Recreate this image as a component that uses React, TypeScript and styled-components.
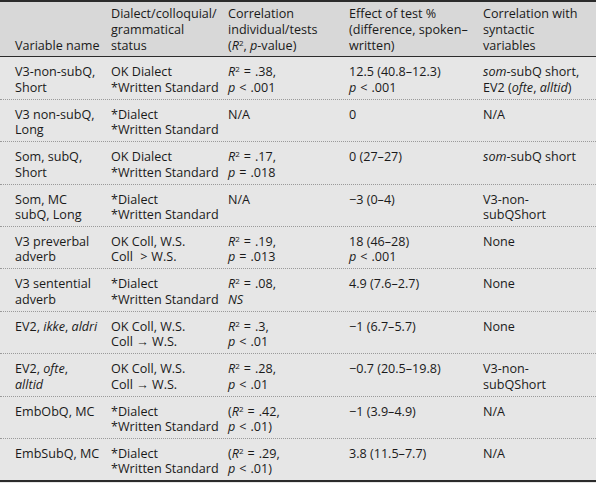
import React from "react";
import styled, { createGlobalStyle } from "styled-components";

const GlobalStyle = createGlobalStyle`
  html, body {
    margin: 0;
    padding: 0;
    background: #e6e6e6;
  }
  body {
    font-family: "Open Sans", "Noto Sans", sans-serif;
    color: #1a1a1a;
  }
`;

const Table = styled.div`
  width: 596px;
  border-top: 2px solid #2b2b2b;
  border-bottom: 2px solid #2b2b2b;
  background: #e6e6e6;
`;

const Row = styled.div<{ $head?: boolean }>`
  display: grid;
  grid-template-columns: 104px 117px 121px 134px 1fr;
  background: ${(p) => (p.$head ? "#d8d8d8" : "#e6e6e6")};
  border-bottom: ${(p) => (p.$head ? "1px solid #2b2b2b" : "1px dotted #9a9a9a")};
  padding: ${(p) => (p.$head ? "4px 0 3px" : "7px 0 3.4px")};
  &:last-child {
    border-bottom: none;
  }
`;

const Cell = styled.div<{ $first?: boolean; $head?: boolean }>`
  padding-left: ${(p) => (p.$first ? "15px" : "7px")};
  padding-right: 4px;
  font-size: 12.6px;
  line-height: ${(p) => (p.$head ? "15.8px" : "15.5px")};
  align-self: ${(p) => (p.$head ? "end" : "start")};
  white-space: nowrap;
`;

const I = styled.i`
  font-style: italic;
`;

const Sup = styled.span`
  font-size: 8px;
  position: relative;
  top: -4px;
  line-height: 0;
`;

const Op = styled.span`
  padding: 0 4px;
`;

const R2 = ({ v }: { v: string }) => (
  <>
    <I>R</I>
    <Sup>2</Sup>
    <Op>=</Op>
    {v}
  </>
);

const P = ({ op, v }: { op: string; v: string }) => (
  <>
    <I>p</I>
    <Op>{op}</Op>
    {v}
  </>
);

const WS = "*Written Standard";

const header = [
  <>Variable name</>,
  <>
    Dialect/colloquial/
    <br />
    grammatical
    <br />
    status
  </>,
  <>
    Correlation
    <br />
    individual/tests
    <br />(<I>R</I>
    <Sup>2</Sup>, <I>p</I>-value)
  </>,
  <>
    Effect of test %
    <br />
    (difference, spoken–
    <br />
    written)
  </>,
  <>
    Correlation with
    <br />
    syntactic
    <br />
    variables
  </>,
];

const rows: React.ReactNode[][] = [
  [
    <>V3-non-subQ,<br />Short</>,
    <>OK Dialect<br />{WS}</>,
    <><R2 v=".38," /><br /><P op="<" v=".001" /></>,
    <>12.5 (40.8–12.3)<br /><P op="<" v=".001" /></>,
    <><I>som</I>-subQ short,<br />EV2 (<I>ofte</I>, <I>alltid</I>)</>,
  ],
  [
    <>V3 non-subQ,<br />Long</>,
    <>*Dialect<br />{WS}</>,
    <>N/A</>,
    <>0</>,
    <>N/A</>,
  ],
  [
    <>Som, subQ,<br />Short</>,
    <>OK Dialect<br />{WS}</>,
    <><R2 v=".17," /><br /><P op="=" v=".018" /></>,
    <>0 (27–27)</>,
    <><I>som</I>-subQ short</>,
  ],
  [
    <>Som, MC<br />subQ, Long</>,
    <>*Dialect<br />{WS}</>,
    <>N/A</>,
    <>−3 (0–4)</>,
    <>V3-non-<br />subQShort</>,
  ],
  [
    <>V3 preverbal<br />adverb</>,
    <>OK Coll, W.S.<br />Coll <Op>&gt;</Op>W.S.</>,
    <><R2 v=".19," /><br /><P op="=" v=".013" /></>,
    <>18 (46–28)<br /><P op="<" v=".001" /></>,
    <>None</>,
  ],
  [
    <>V3 sentential<br />adverb</>,
    <>*Dialect<br />{WS}</>,
    <><R2 v=".08," /><br /><I>NS</I></>,
    <>4.9 (7.6–2.7)</>,
    <>None</>,
  ],
  [
    <>EV2, <I>ikke</I>, <I>aldri</I></>,
    <>OK Coll, W.S.<br />Coll → W.S.</>,
    <><R2 v=".3," /><br /><P op="<" v=".01" /></>,
    <>−1 (6.7–5.7)</>,
    <>None</>,
  ],
  [
    <>EV2, <I>ofte</I>,<br /><I>alltid</I></>,
    <>OK Coll, W.S.<br />Coll → W.S.</>,
    <><R2 v=".28," /><br /><P op="<" v=".01" /></>,
    <>−0.7 (20.5–19.8)</>,
    <>V3-non-<br />subQShort</>,
  ],
  [
    <>EmbObQ, MC</>,
    <>*Dialect<br />{WS}</>,
    <>(<R2 v=".42," /><br /><P op="<" v=".01)" /></>,
    <>−1 (3.9–4.9)</>,
    <>N/A</>,
  ],
  [
    <>EmbSubQ, MC</>,
    <>*Dialect<br />{WS}</>,
    <>(<R2 v=".29," /><br /><P op="<" v=".01)" /></>,
    <>3.8 (11.5–7.7)</>,
    <>N/A</>,
  ],
];

export default function App() {
  return (
    <>
      <GlobalStyle />
      <Table>
        <Row $head>
          {header.map((h, i) => (
            <Cell key={i} $head $first={i === 0}>
              {h}
            </Cell>
          ))}
        </Row>
        {rows.map((r, ri) => (
          <Row key={ri}>
            {r.map((c, ci) => (
              <Cell key={ci} $first={ci === 0}>
                {c}
              </Cell>
            ))}
          </Row>
        ))}
      </Table>
    </>
  );
}
